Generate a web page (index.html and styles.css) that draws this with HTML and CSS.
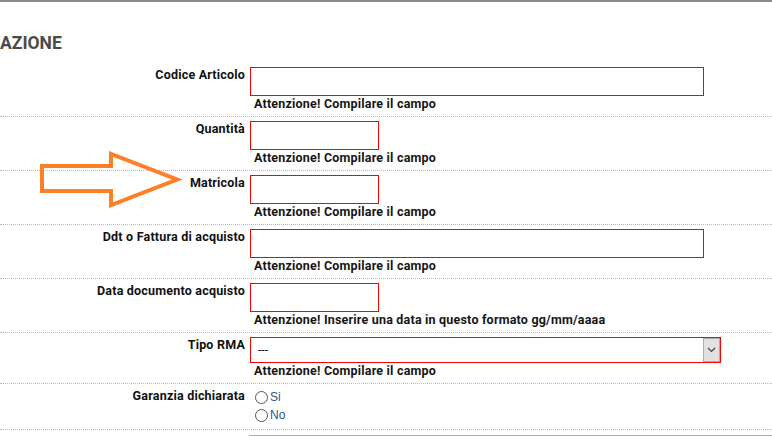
FILE: index.html
```html
<!DOCTYPE html>
<html lang="it">
<head>
<meta charset="utf-8">
<title>RMA</title>
<link rel="stylesheet" href="styles.css">
</head>
<body>
<div class="page">
  <h2 class="title">AZIONE</h2>
  <form class="form">
    <div class="row">
      <label class="lbl">Codice Articolo</label>
      <div class="field">
        <input class="txt w-long" type="text">
        <div class="err">Attenzione! Compilare il campo</div>
      </div>
    </div>
    <div class="row">
      <label class="lbl">Quantità</label>
      <div class="field">
        <input class="txt w-short" type="text">
        <div class="err">Attenzione! Compilare il campo</div>
      </div>
    </div>
    <div class="row">
      <label class="lbl">Matricola</label>
      <div class="field">
        <input class="txt w-short" type="text">
        <div class="err">Attenzione! Compilare il campo</div>
      </div>
    </div>
    <div class="row">
      <label class="lbl">Ddt o Fattura di acquisto</label>
      <div class="field">
        <input class="txt w-long" type="text">
        <div class="err">Attenzione! Compilare il campo</div>
      </div>
    </div>
    <div class="row">
      <label class="lbl">Data documento acquisto</label>
      <div class="field">
        <input class="txt w-short" type="text">
        <div class="err">Attenzione! Inserire una data in questo formato gg/mm/aaaa</div>
      </div>
    </div>
    <div class="row">
      <label class="lbl">Tipo RMA</label>
      <div class="field">
        <div class="select">
          <select><option>---</option></select>
          <span class="btn"><svg width="9" height="6" viewBox="0 0 9 6"><path d="M1 1 L4.5 4.5 L8 1" fill="none" stroke="#444" stroke-width="1.2"/></svg></span>
        </div>
        <div class="err">Attenzione! Compilare il campo</div>
      </div>
    </div>
    <div class="row">
      <label class="lbl">Garanzia dichiarata</label>
      <div class="field">
        <label class="opt"><input type="radio" name="g">Si</label>
        <label class="opt"><input type="radio" name="g">No</label>
      </div>
    </div>
    <div class="row last">
      <label class="lbl"></label>
      <div class="field">
        <textarea class="area"></textarea>
      </div>
    </div>
  </form>
</div>
<svg class="arrow" width="146" height="62" viewBox="38 148 146 62">
  <polygon points="42,166 111,166 111,154 177,179.5 111,205 111,191 42,191" fill="none" stroke="#ff7f27" stroke-width="4" stroke-linejoin="miter"/>
</svg>
</body>
</html>
```
FILE: styles.css
```css
html, body {
  margin: 0;
  padding: 0;
  background: #fff;
}
body {
  position: relative;
  width: 772px;
  height: 436px;
  overflow: hidden;
  font-family: Roboto, "Liberation Sans", sans-serif;
}
.page {
  border-top: 2px solid #8a8a8a;
  height: 434px;
  overflow: hidden;
}
.title {
  margin: 30px 0 0;
  font-size: 17.5px;
  line-height: 22px;
  font-weight: 700;
  color: #4a4a4a;
}
.form {
  margin: 9px 0 0;
}
.row {
  display: grid;
  grid-template-columns: 245px auto;
  column-gap: 5px;
  padding: 4px 0 5px;
  border-bottom: 1px dotted #b8b8b8;
}
.lbl {
  text-align: right;
  font-weight: 700;
  font-size: 12.5px;
  letter-spacing: 0.2px;
  line-height: 15px;
  color: #111;
}
.txt {
  display: block;
  box-sizing: border-box;
  height: 29px;
  margin: 0;
  padding: 0 4px;
  border: 1px solid #ff0000;
  background: #fff;
  outline: none;
}
.w-long { width: 454px; }
.w-short { width: 129px; }
.err {
  margin-left: 4px;
  font-weight: 700;
  font-size: 12.5px;
  letter-spacing: 0.2px;
  line-height: 15px;
  color: #161616;
  white-space: nowrap;
}
.select {
  display: flex;
  box-sizing: border-box;
  width: 471px;
  height: 26px;
  border: 1px solid #ff0000;
  background: #fff;
}
.select select {
  flex: 1;
  appearance: none;
  -webkit-appearance: none;
  border: 0;
  margin: 0;
  padding: 0 0 0 7px;
  background: #fff;
  font-family: Roboto, "Liberation Sans", sans-serif;
  font-size: 12px;
  color: #111;
  outline: none;
}
.select .btn {
  width: 17px;
  box-sizing: border-box;
  background: #e1e1e1;
  border: 1px solid #adadad;
  display: flex;
  align-items: center;
  justify-content: center;
}
.opt {
  display: flex;
  align-items: center;
  height: 18px;
  font-family: "Liberation Sans", Arial, sans-serif;
  font-size: 12px;
  color: #2c5590;
}
.opt input {
  appearance: none;
  -webkit-appearance: none;
  box-sizing: border-box;
  width: 13px;
  height: 13px;
  margin: 0 2px 0 5px;
  border: 1px solid #555;
  border-radius: 50%;
  background: #fff;
}
.row.last {
  border-bottom: 0;
  padding-top: 5px;
}
.area {
  display: block;
  box-sizing: border-box;
  width: 540px;
  height: 40px;
  margin: 0 0 0 -1px;
  border: 1px solid #b0b0b0;
  resize: none;
}
.arrow {
  position: absolute;
  left: 38px;
  top: 148px;
  pointer-events: none;
}
```
